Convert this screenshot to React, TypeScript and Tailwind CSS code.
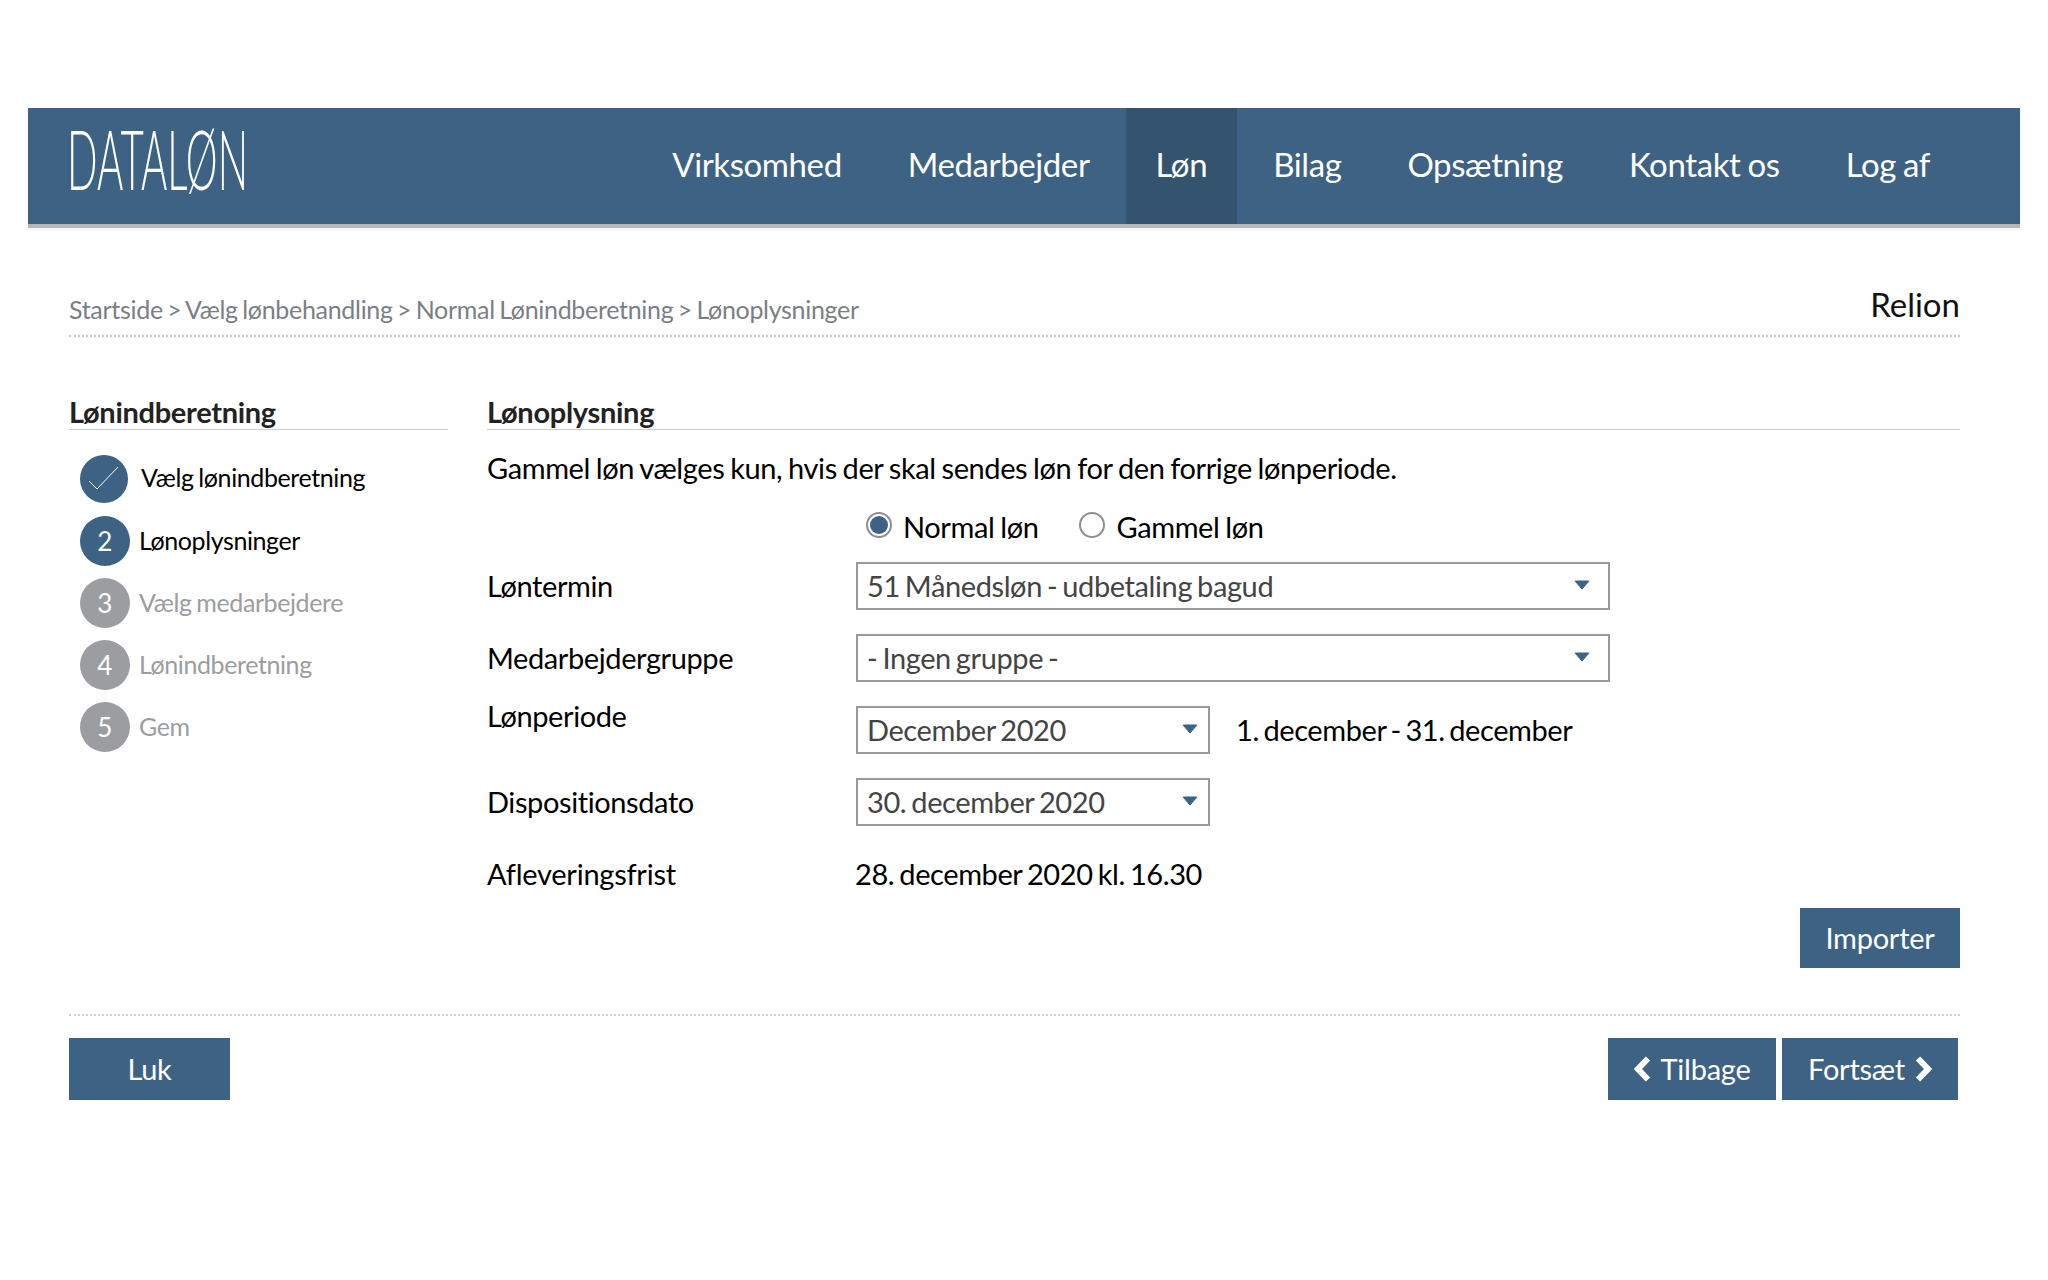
const navItems = ["Virksomhed", "Medarbejder", "Løn", "Bilag", "Opsætning", "Kontakt os", "Log af"];

const steps = [
  { n: "2", label: "Lønoplysninger", active: true },
  { n: "3", label: "Vælg medarbejdere", active: false },
  { n: "4", label: "Lønindberetning", active: false },
  { n: "5", label: "Gem", active: false },
];

function Caret() {
  return (
    <svg width="16" height="10" viewBox="0 0 16 10" className="mb-[3px] shrink-0">
      <path d="M1 1h14L8 9z" fill="#3d6283" stroke="#3d6283" strokeLinejoin="round" />
    </svg>
  );
}

function Select({ value, wide }: { value: string; wide?: boolean }) {
  return (
    <div
      className={`flex h-[48px] items-center justify-between border-2 border-[#999999] pl-[9px] text-[#444444] [word-spacing:-2px] ${
        wide ? "w-[754px] pr-[18px]" : "w-[354px] pr-[10px]"
      }`}
    >
      <span className="pb-[1px]">{value}</span>
      <Caret />
    </div>
  );
}

function Radio({ checked, label }: { checked?: boolean; label: string }) {
  return (
    <div className="flex items-center">
      <span className="flex size-[26px] items-center justify-center rounded-full border-2 border-[#8a8f94]">
        {checked && <span className="size-[18px] rounded-full bg-[#3d6283]" />}
      </span>
      <span className="ml-[11px] mt-[4px]">{label}</span>
    </div>
  );
}

function BlueButton({ children, className }: { children: React.ReactNode; className: string }) {
  return (
    <button
      type="button"
      className={`flex items-center justify-center bg-[#3d6283] pb-[1px] text-[29px] tracking-[-0.25px] text-white ${className}`}
    >
      {children}
    </button>
  );
}

function Chevron({ right }: { right?: boolean }) {
  return (
    <svg width="18" height="26" viewBox="0 0 18 26" fill="none">
      <path d={right ? "M4 2.5L14 13L4 23.5" : "M14 2.5L4 13L14 23.5"} stroke="#ffffff" strokeWidth="6" />
    </svg>
  );
}

export default function App() {
  return (
    <div className="min-h-[1280px] bg-white pt-[108px] font-['Lato',sans-serif] tracking-[-0.4px] text-black [word-spacing:-1.2px]">
      <header className="mx-[28px] flex h-[120px] items-start justify-between border-b-[4px] border-[#b5b8ba] bg-[#3d6283] pl-[39px] pr-[60px] shadow-[0_2px_4px_rgba(0,0,0,0.06)]">
        <div className="w-[177px] origin-left scale-x-[0.49] whitespace-nowrap text-[82px] leading-[100px] font-light tracking-normal text-white">
          DATALØN
        </div>
        <nav className="flex h-[116px] gap-[6px] text-[33px] text-white [word-spacing:-1px]">
          {navItems.map((item) => (
            <a key={item} className={`flex items-center px-[30px] pb-[3px] ${item === "Løn" ? "bg-[#34536e]" : ""}`}>
              {item}
            </a>
          ))}
        </nav>
      </header>

      <div className="mx-[69px] w-[1891px]">
        <div className="mt-[60px] flex h-[49px] items-start justify-between border-b-2 border-dotted border-[#c4c4c4]">
          <div className="mt-[3px] text-[25px] tracking-[-0.3px] text-[#7a7f85] [word-spacing:-1.7px]">
            Startside &gt; Vælg lønbehandling &gt; Normal Lønindberetning &gt; Lønoplysninger
          </div>
          <div className="-mt-[3px] text-[33px] leading-[38px] tracking-normal text-[#111111]">Relion</div>
        </div>

        <div className="mt-[57px] flex gap-[39px]">
          <aside className="w-[379px]">
            <h2 className="h-[36px] border-b border-[#cccccc] text-[29px] leading-[36px] font-bold tracking-[-0.3px] text-[#222222]">
              Lønindberetning
            </h2>
            <ol className="mt-[24px] ml-[11px] flex flex-col gap-[12px] text-[25px]">
              <li className="flex h-[50px] items-center">
                <span className="flex size-[48px] items-center justify-center rounded-full bg-[#3d6283]">
                  <svg width="48" height="48" viewBox="0 0 48 48" fill="none">
                    <path d="M9 26l8 8L38 12" stroke="#ffffff" strokeWidth="1" />
                  </svg>
                </span>
                <span className="mb-[3px] ml-[13px]">Vælg lønindberetning</span>
              </li>
              {steps.map((s) => (
                <li key={s.n} className="flex h-[50px] items-center">
                  <span
                    className={`flex size-[50px] items-center justify-center rounded-full pr-[1px] text-[26px] text-white ${
                      s.active ? "bg-[#3d6283]" : "bg-[#9b9da0]"
                    }`}
                  >
                    {s.n}
                  </span>
                  <span className={`ml-[9px] ${s.active ? "text-black" : "text-[#9b9da0]"}`}>{s.label}</span>
                </li>
              ))}
            </ol>
          </aside>

          <main className="w-[1473px] text-[29px] leading-[44px]">
            <h2 className="h-[36px] border-b border-[#cccccc] text-[29px] leading-[36px] font-bold tracking-[-0.3px] text-[#222222]">
              Lønoplysning
            </h2>
            <p className="mt-[20px] leading-[36px]">
              Gammel løn vælges kun, hvis der skal sendes løn for den forrige lønperiode.
            </p>
            <div className="mt-[22px] ml-[379px] flex h-[34px] gap-[41px]">
              <Radio checked label="Normal løn" />
              <Radio label="Gammel løn" />
            </div>
            <div className="mt-[20px] grid grid-cols-[369px_1fr] items-center gap-y-[24px]">
              <label className="pb-[1px]">Løntermin</label>
              <Select wide value="51 Månedsløn - udbetaling bagud" />
              <label className="pb-[1px]">Medarbejdergruppe</label>
              <Select wide value="- Ingen gruppe -" />
              <label className="-mt-[28px]">Lønperiode</label>
              <div className="flex items-center">
                <Select value="December 2020" />
                <span className="ml-[26px] [word-spacing:-2.5px]">1. december - 31. december</span>
              </div>
              <label className="pb-[1px]">Dispositionsdato</label>
              <Select value="30. december 2020" />
              <label className="pb-[1px] pt-[2px] tracking-[-0.25px]">Afleveringsfrist</label>
              <div className="-ml-[1px] pb-[1px] pt-[2px] [word-spacing:-2px]">28. december 2020 kl. 16.30</div>
            </div>
            <div className="mt-[11px] flex justify-end">
              <BlueButton className="h-[60px] w-[160px]">Importer</BlueButton>
            </div>
          </main>
        </div>

        <div className="mt-[46px] flex justify-between border-t-2 border-dotted border-[#cfcfcf] pt-[22px] pr-[2px]">
          <BlueButton className="h-[62px] w-[161px]">Luk</BlueButton>
          <div className="flex gap-[6px]">
            <BlueButton className="h-[62px] w-[168px] gap-[9px]">
              <Chevron />
              Tilbage
            </BlueButton>
            <BlueButton className="h-[62px] w-[176px] gap-[9px]">
              Fortsæt
              <Chevron right />
            </BlueButton>
          </div>
        </div>
      </div>
    </div>
  );
}
